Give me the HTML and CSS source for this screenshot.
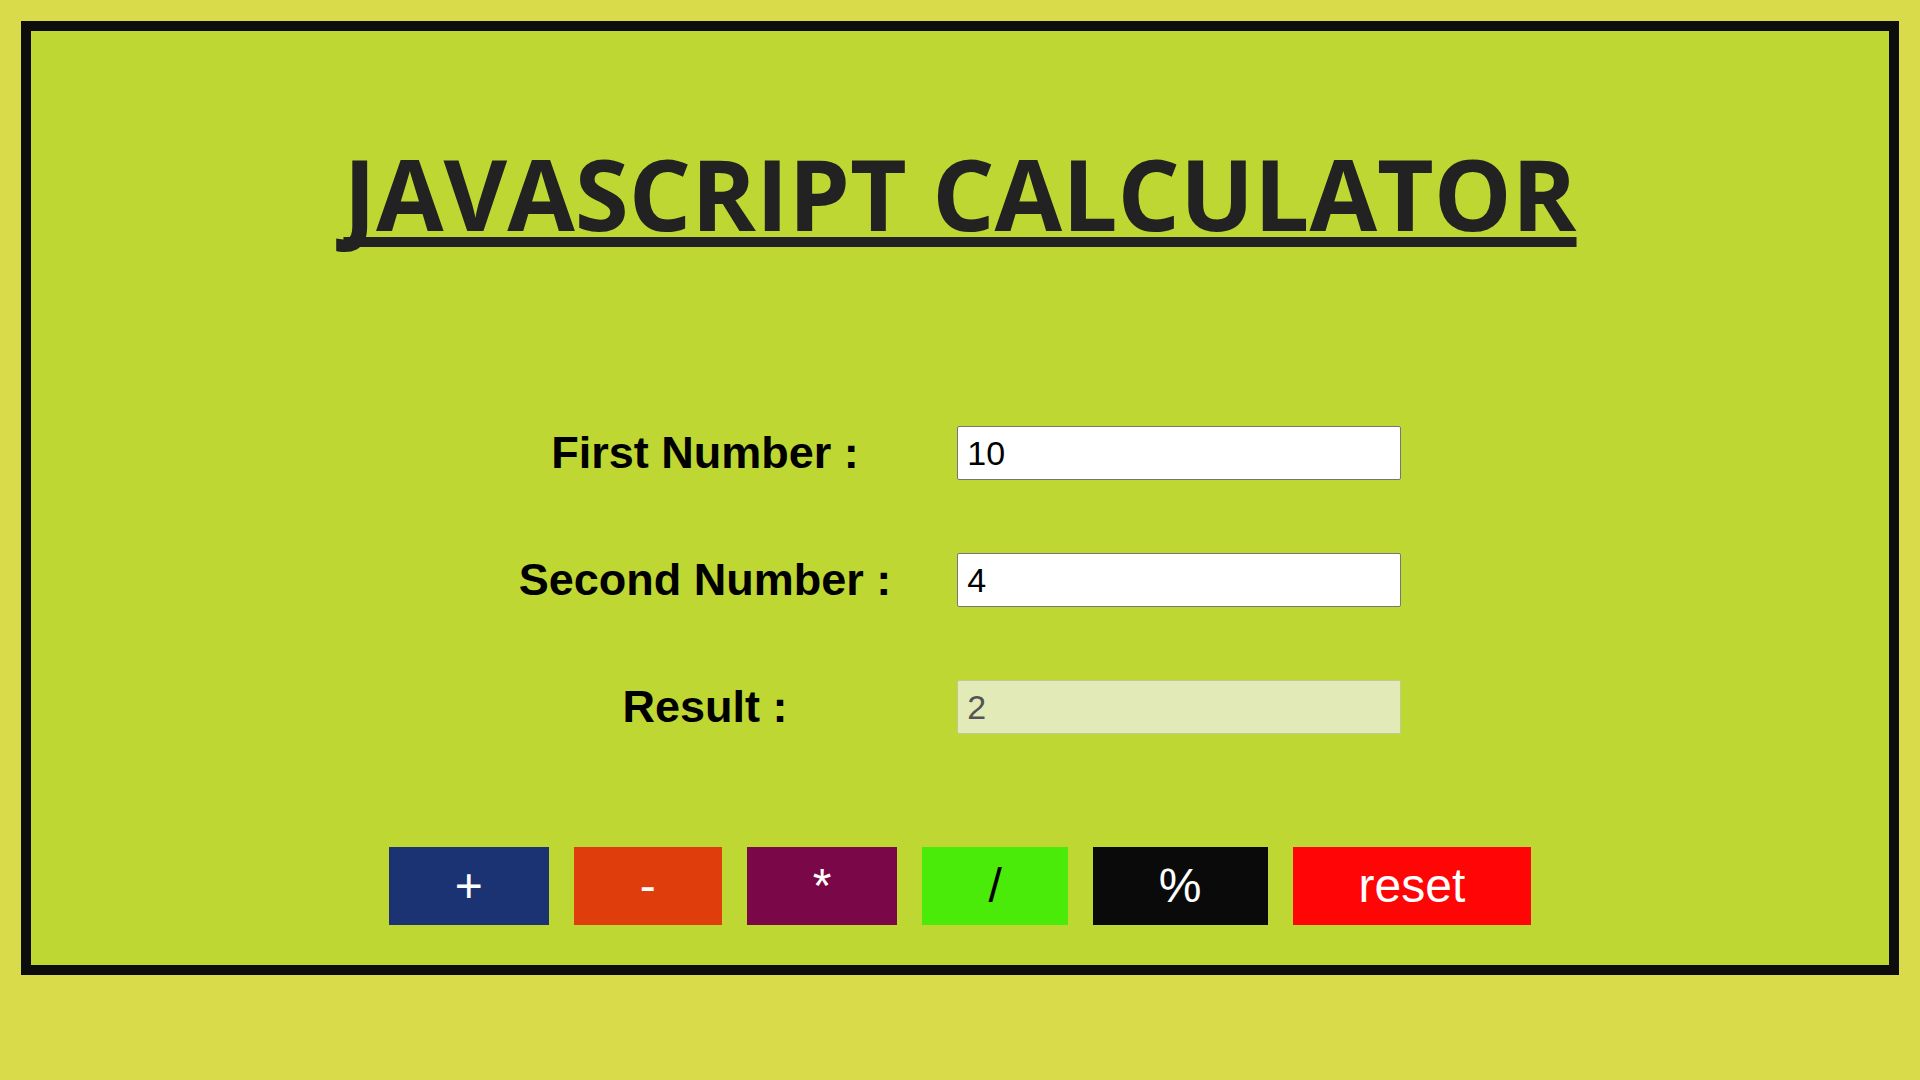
FILE: index.html
```html
<!DOCTYPE html>
<html lang="en">
<head>
<meta charset="utf-8">
<title>JavaScript Calculator</title>
<link rel="stylesheet" href="styles.css">
</head>
<body>
<main class="frame">
  <h1 class="title">JAVASCRIPT CALCULATOR</h1>
  <form class="calc-form" onsubmit="return false">
    <label class="label" for="first">First Number :</label>
    <input class="field" id="first" type="text" value="10">
    <label class="label" for="second">Second Number :</label>
    <input class="field" id="second" type="text" value="4">
    <label class="label" for="result">Result :</label>
    <input class="field field-result" id="result" type="text" value="2" readonly>
  </form>
  <div class="buttons">
    <button class="btn btn-add" type="button">+</button>
    <button class="btn btn-sub" type="button">-</button>
    <button class="btn btn-mul" type="button">*</button>
    <button class="btn btn-div" type="button">/</button>
    <button class="btn btn-mod" type="button">%</button>
    <button class="btn btn-reset" type="button">reset</button>
  </div>
</main>
</body>
</html>
```
FILE: styles.css
```css
html, body {
  margin: 0;
  padding: 0;
}

body {
  background: #d9db4a;
  font-family: "Liberation Sans", Arial, sans-serif;
}

.frame {
  margin: 21px;
  border: 10px solid #0d0d0d;
  background: #bed732;
  padding: 95px 0 40px;
}

.title {
  margin: 0;
  text-align: center;
  font-family: "Open Sans", "Noto Sans", sans-serif;
  font-weight: 700;
  font-size: 98px;
  line-height: normal;
  color: #222222;
  text-decoration: underline;
  text-decoration-thickness: 10px;
  text-underline-offset: 6px;
  text-decoration-skip-ink: none;
}

.calc-form {
  margin-top: 166px;
  display: grid;
  grid-template-columns: auto 444px;
  justify-content: center;
  align-items: center;
  column-gap: 66px;
  row-gap: 73px;
}

.label {
  text-align: center;
  font-weight: 700;
  font-size: 45px;
  line-height: 54px;
  color: #000;
}

.field {
  box-sizing: border-box;
  width: 444px;
  height: 54px;
  margin: 0;
  padding: 0 9px;
  border: 1px solid #767676;
  border-radius: 2px;
  background: #ffffff;
  font-family: "Liberation Sans", Arial, sans-serif;
  font-size: 34px;
  color: #000;
  outline: none;
}

.field-result {
  background: #e2ebb8;
  border-color: #c0cb93;
  color: #545454;
}

.buttons {
  margin-top: 113px;
  display: flex;
  justify-content: center;
  gap: 25px;
}

.btn {
  height: 78px;
  margin: 0;
  padding: 0 66px;
  border: none;
  font-family: "Liberation Sans", Arial, sans-serif;
  font-size: 48px;
  line-height: 78px;
  color: #ffffff;
  cursor: pointer;
}

.btn-add { background: #1b3372; }
.btn-sub { background: #e03d0c; }
.btn-mul { background: #7a0747; }
.btn-div { background: #4aeb08; color: #000; }
.btn-mod { background: #0a0a0a; }
.btn-reset { background: #ff0505; }
```
